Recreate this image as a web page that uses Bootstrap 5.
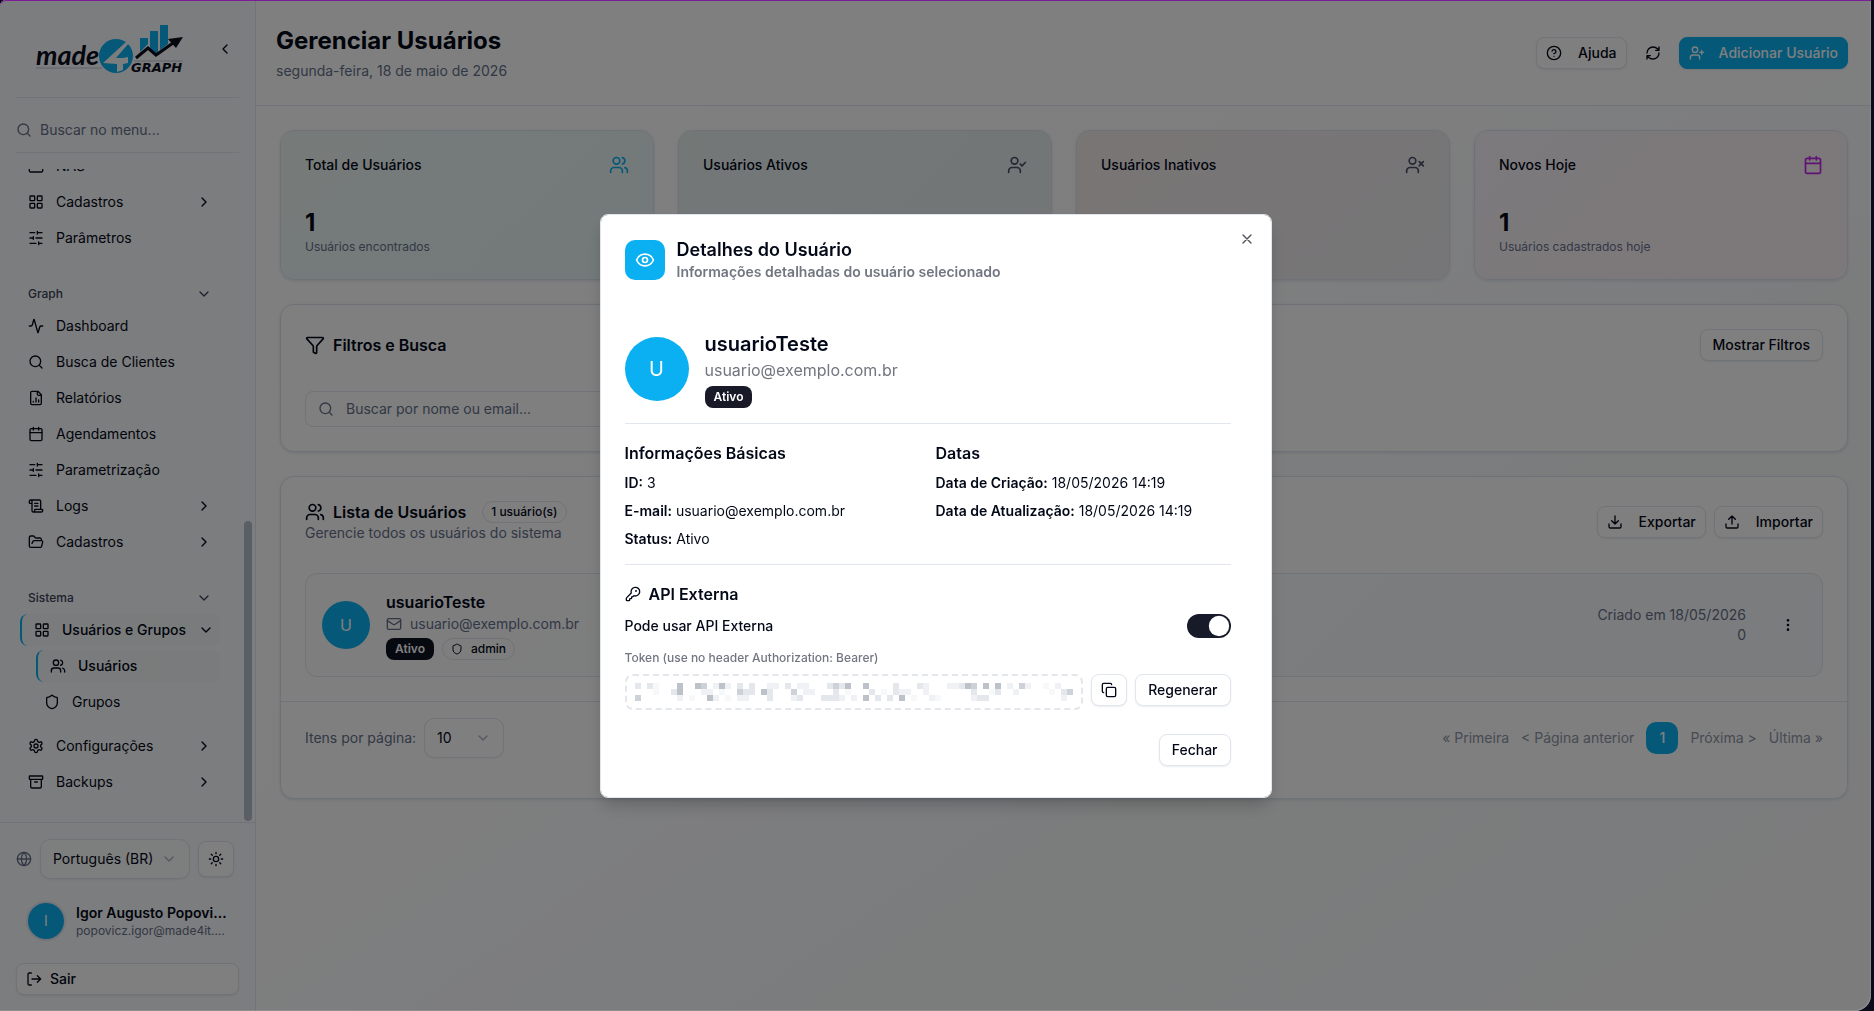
<!DOCTYPE html>
<html lang="pt-BR">
<head>
<meta charset="utf-8">
<meta name="viewport" content="width=device-width, initial-scale=1">
<title>Gerenciar Usuários</title>
<link href="https://cdn.jsdelivr.net/npm/bootstrap@5.3.0/dist/css/bootstrap.min.css" rel="stylesheet">
<style>
:root{--brand:#0ab0f1;--ink:#020817;--soft:#64708a;--line:#e1e6ee}
html{background:#0b0b1d}
body{font-family:Inter,"Liberation Sans",sans-serif;font-size:14px;line-height:20px;color:var(--ink);background:#0b0b1d;overflow:hidden}
h1,h2,h3,h4,p{margin:0}
a{color:inherit;text-decoration:none}
.ico{width:16px;height:16px;flex:none;fill:none;stroke:currentColor;stroke-width:2;stroke-linecap:round;stroke-linejoin:round}
.ico-lg{width:20px;height:20px}
.ico-sm{width:12px;height:12px}
.soft{color:var(--soft)}
.tiny{font-size:12px;line-height:16px}
.app-window{height:100vh;margin-right:3px;border-radius:6px 0 16px 0;overflow:hidden;background:linear-gradient(145deg,#fff 0%,#fdfdfe 45%,#f8fafd 65%,#f7f8f9 68%,#f8f9fb 100%)}
.side{width:256px;flex:none;background:#f9fafd;border-right:1px solid var(--line)}
.side-top{height:98px;margin:0 16px;border-bottom:1px solid var(--line);padding:24px 6px 0 20px}
.side-top .bare{padding-top:17px}
.logo{width:148px;height:52px;overflow:visible}
.side-find{height:55px;margin:0 16px 16px;border-bottom:1px solid var(--line);padding-top:10px}
.bare{border:0;background:none;padding:0;color:var(--ink)}
.side-find input{outline:0;min-width:0}
input::placeholder{color:var(--soft)!important;opacity:1}
.side-nav{flex:1 1 0;min-height:0;overflow:hidden;padding:0 35px 24px 16px;justify-content:flex-end}
.side-item{display:flex;align-items:center;gap:12px;height:32px;flex:none;padding:0 8px 0 12px;border-radius:8px;margin-bottom:4px;font-weight:400;white-space:nowrap}
.side-item.sub{margin-left:16px}
.side-item.on{margin-left:4px;border-left:2px solid var(--brand);background:linear-gradient(90deg,#f5f7f9,#f3f8f9);font-weight:500}
.side-item.on.sub{margin-left:20px}
.side-label{display:flex;align-items:center;justify-content:space-between;height:32px;flex:none;padding:0 8px 0 12px;margin-top:20px;font-size:12px;font-weight:500;color:#3b4358}
.side-thumb{position:absolute;right:3px;bottom:1px;width:8px;height:46%;border-radius:4px;background:#b4bccb}
.side-foot{border-top:1px solid var(--line);padding:16px}
.pick{appearance:none;height:40px;border:1px solid var(--line);border-radius:10px;background:#fff url("data:image/svg+xml,%3Csvg xmlns='http://www.w3.org/2000/svg' viewBox='0 0 24 24' fill='none' stroke='%23a9b0be' stroke-width='2' stroke-linecap='round' stroke-linejoin='round'%3E%3Cpath d='m6 9 6 6 6-6'/%3E%3C/svg%3E") no-repeat right 12px center/16px;padding:0 12px;font-size:14px;color:var(--ink);box-shadow:0 1px 2px rgba(15,23,42,.06)}
.side .pick{width:150px;background-color:#fbfcfd}
.pick.count{width:80px}
.line-btn{--bs-btn-font-size:14px;--bs-btn-line-height:20px;--bs-btn-font-weight:500;--bs-btn-padding-y:5px;--bs-btn-padding-x:12px;--bs-btn-color:var(--ink);--bs-btn-bg:#fff;--bs-btn-border-color:var(--line);--bs-btn-border-radius:8px;--bs-btn-hover-bg:#f4f6f9;--bs-btn-hover-color:var(--ink);--bs-btn-hover-border-color:var(--line);box-shadow:0 1px 2px rgba(15,23,42,.08);display:inline-flex;align-items:center;gap:16px}
.with-ico{--bs-btn-padding-x:9px}
.brand-btn{--bs-btn-color:#fff;--bs-btn-bg:var(--brand);--bs-btn-border-color:var(--brand);--bs-btn-hover-bg:#0a9fd9;--bs-btn-hover-color:#fff;gap:14px}
.square{--bs-btn-padding-x:0;width:36px;height:32px;justify-content:center}
.square.tall{height:36px}
.sync{padding:0 18px}
.disc{display:flex;align-items:center;justify-content:center;flex:none;border-radius:50%;background:var(--brand);color:#fff}
.disc-36{width:36px;height:36px;font-size:14px;box-shadow:0 0 0 2px #e3e9f0}
.disc-48{width:48px;height:48px;font-size:16px}
.disc-64{width:64px;height:64px;font-size:20px}
.me-card{gap:12px;padding:24px 12px}
.who{font-weight:600;font-size:14px;line-height:20px}
.page-top{height:106px;border-bottom:1px solid var(--line);padding:0 23px 0 20px;background:rgba(255,255,255,.7)}
.page-top h1{font-size:24px;line-height:32px;font-weight:700}
.page-body{padding:24px 23px 24px 24px;gap:24px}
.panel{border:1px solid #dde4ee;border-radius:14px;background:#fff;box-shadow:0 1px 3px rgba(50,80,130,.14)}
.stat{height:150px;padding:24px}
.stat h2{font-size:14px;line-height:20px;font-weight:500}
.stat strong{display:block;font-size:24px;line-height:32px;font-weight:700}
.stat-a{background:linear-gradient(135deg,#edf7f5,#e6f4f3)}
.stat-b{background:linear-gradient(135deg,#e7f0ef,#e6ebef)}
.stat-c{background:linear-gradient(135deg,#f3ebea,#ececf0)}
.stat-d{background:linear-gradient(135deg,#f8f4f9,#fbf0f3)}
.stat-b .ico,.stat-c .ico{color:#475069}
.panel h2.head{font-size:16px;line-height:22px;font-weight:600}
.panel-head{margin-bottom:30px}
.find-box{height:36px;width:448px;border:1px solid var(--line);border-radius:8px;padding:0 12px;gap:12px;color:var(--soft)}
.tagx{display:inline-flex;align-items:center;height:22px;padding:0 9px;border-radius:8px;font-size:12px;line-height:16px;font-weight:600;background:#0f1222;color:#fff}
.tagx.lined{background:none;border:1px solid var(--line);padding:0 8px;color:var(--ink);font-weight:500}
.tagx.round{border-radius:11px}
.user-row{border:1px solid var(--line);border-radius:12px;background:linear-gradient(135deg,#fdfdfe,#f6f8fb);padding:16px;height:104px}
.user-row .bare{padding:0 10px 0 18px}
.pager{gap:12px;color:#8e96a8}
.pager .now{width:32px;height:32px;border-radius:10px;background:var(--brand);color:#fff;font-weight:500;display:flex;align-items:center;justify-content:center}
.veil{display:block;width:auto;right:3px;background:rgba(0,0,0,.5);border-radius:6px 0 16px 0;box-shadow:inset 0 1px 0 #7a1d97,inset -1px -1px 0 rgba(255,255,255,.12);overflow:hidden}
.veil .modal-dialog{max-width:672px}
.veil .modal-content{border:1px solid #e1e6ee;border-radius:8px;padding:23px 40px 31px 24px;color:var(--ink);box-shadow:0 10px 18px -4px rgba(0,0,0,.22)}
.veil .tagx{background:#181a27}
.tile{width:40px;height:40px;border-radius:10px;background:var(--brand);color:#fff}
.dlg-title{font-size:18px;line-height:24px;font-weight:600}
.dlg-sub{font-weight:600;color:#717680}
.dlg-close{position:absolute;top:16px;right:16px;color:#4c515c;line-height:1}
.dlg-head{margin-bottom:48px}
.dlg-name{font-size:20px;line-height:28px;font-weight:600}
.dlg-mail{font-size:16px;line-height:24px;color:#717680}
.dlg-rule{height:1px;background:var(--line);margin:15px 0 17px}
.dlg-h{font-size:16px;line-height:24px;font-weight:600}
.facts p{margin-top:8px}
.facts b{font-weight:600}
.form-check-input.toggle{width:44px;height:24px;margin:0;float:none;border:0;background-color:#171a29;border-radius:12px;--bs-form-switch-bg:url("data:image/svg+xml,%3Csvg xmlns='http://www.w3.org/2000/svg' viewBox='-4 -4 8 8'%3E%3Ccircle r='3.4' fill='%23fff'/%3E%3C/svg%3E")!important}
.form-check-input.toggle:checked{background-color:#171a29}
.token{height:36px;border:2px dashed #e3e6eb;border-radius:8px;padding:0 8px;flex:1;overflow:hidden}
.token svg{width:438px;height:18px;flex:none}
</style>
</head>
<body>
<svg class="d-none" xmlns="http://www.w3.org/2000/svg">
<symbol id="i-left" viewBox="0 0 24 24"><path d="m15 18-6-6 6-6"/></symbol>
<symbol id="i-right" viewBox="0 0 24 24"><path d="m9 18 6-6-6-6"/></symbol>
<symbol id="i-down" viewBox="0 0 24 24"><path d="m6 9 6 6 6-6"/></symbol>
<symbol id="i-search" viewBox="0 0 24 24"><circle cx="11" cy="11" r="8"/><path d="m21 21-4.300-4.300"/></symbol>
<symbol id="i-nas" viewBox="0 0 24 24"><rect x="2" y="3" width="20" height="18" rx="2"/></symbol>
<symbol id="i-grid" viewBox="0 0 24 24"><rect x="3" y="3" width="7" height="7" rx="1"/><rect x="14" y="3" width="7" height="7" rx="1"/><rect x="14" y="14" width="7" height="7" rx="1"/><rect x="3" y="14" width="7" height="7" rx="1"/></symbol>
<symbol id="i-sliders" viewBox="0 0 24 24"><path d="M21 4h-7M10 4H3M21 12h-9M8 12H3M21 20h-5M12 20H3M14 2v4M8 10v4M16 18v4"/></symbol>
<symbol id="i-pulse" viewBox="0 0 24 24"><path d="M22 12h-2.480a2 2 0 0 0-1.930 1.460l-2.350 8.360a.25.25 0 0 1-.48 0L9.240 2.180a.25.25 0 0 0-.48 0l-2.350 8.360A2 2 0 0 1 4.490 12H2"/></symbol>
<symbol id="i-report" viewBox="0 0 24 24"><path d="M15 2H6a2 2 0 0 0-2 2v16a2 2 0 0 0 2 2h12a2 2 0 0 0 2-2V7ZM14 2v4a2 2 0 0 0 2 2h4M8 18v-1M12 18v-6M16 18v-3"/></symbol>
<symbol id="i-cal" viewBox="0 0 24 24"><path d="M8 2v4M16 2v4M3 10h18"/><rect x="3" y="4" width="18" height="18" rx="2"/></symbol>
<symbol id="i-scroll" viewBox="0 0 24 24"><path d="M15 12h-5M15 8h-5M19 17V5a2 2 0 0 0-2-2H4M8 21h12a2 2 0 0 0 2-2v-1a1 1 0 0 0-1-1H11a1 1 0 0 0-1 1v1a2 2 0 1 1-4 0V5a2 2 0 1 0-4 0v2a1 1 0 0 0 1 1h3"/></symbol>
<symbol id="i-folder" viewBox="0 0 24 24"><path d="m6 14 1.500-2.900A2 2 0 0 1 9.240 10H20a2 2 0 0 1 1.940 2.500l-1.540 6a2 2 0 0 1-1.950 1.500H4a2 2 0 0 1-2-2V5a2 2 0 0 1 2-2h3.900a2 2 0 0 1 1.690.9l.81 1.200a2 2 0 0 0 1.670.9H18a2 2 0 0 1 2 2v2"/></symbol>
<symbol id="i-users" viewBox="0 0 24 24"><path d="M16 21v-2a4 4 0 0 0-4-4H6a4 4 0 0 0-4 4v2M22 21v-2a4 4 0 0 0-3-3.870M16 3.130a4 4 0 0 1 0 7.750"/><circle cx="9" cy="7" r="4"/></symbol>
<symbol id="i-ucheck" viewBox="0 0 24 24"><path d="M16 21v-2a4 4 0 0 0-4-4H6a4 4 0 0 0-4 4v2M16 11l2 2 4-4"/><circle cx="9" cy="7" r="4"/></symbol>
<symbol id="i-ux" viewBox="0 0 24 24"><path d="M16 21v-2a4 4 0 0 0-4-4H6a4 4 0 0 0-4 4v2M17 8l5 5M22 8l-5 5"/><circle cx="9" cy="7" r="4"/></symbol>
<symbol id="i-uplus" viewBox="0 0 24 24"><path d="M16 21v-2a4 4 0 0 0-4-4H6a4 4 0 0 0-4 4v2M19 8v6M22 11h-6"/><circle cx="9" cy="7" r="4"/></symbol>
<symbol id="i-shield" viewBox="0 0 24 24"><path d="M20 13c0 5-3.500 7.500-7.660 8.950a1 1 0 0 1-.67-.01C7.500 20.500 4 18 4 13V6a1 1 0 0 1 1-1c2 0 4.500-1.200 6.240-2.720a1.170 1.170 0 0 1 1.520 0C14.510 3.810 17 5 19 5a1 1 0 0 1 1 1z"/></symbol>
<symbol id="i-gear" viewBox="0 0 24 24"><path d="M12.220 2h-.44a2 2 0 0 0-2 2v.18a2 2 0 0 1-1 1.730l-.43.25a2 2 0 0 1-2 0l-.15-.08a2 2 0 0 0-2.730.73l-.22.38a2 2 0 0 0 .73 2.730l.15.1a2 2 0 0 1 1 1.720v.51a2 2 0 0 1-1 1.740l-.15.09a2 2 0 0 0-.73 2.730l.22.38a2 2 0 0 0 2.730.73l.15-.08a2 2 0 0 1 2 0l.43.25a2 2 0 0 1 1 1.730V20a2 2 0 0 0 2 2h.44a2 2 0 0 0 2-2v-.18a2 2 0 0 1 1-1.730l.43-.25a2 2 0 0 1 2 0l.15.08a2 2 0 0 0 2.730-.73l.22-.39a2 2 0 0 0-.73-2.730l-.15-.08a2 2 0 0 1-1-1.740v-.5a2 2 0 0 1 1-1.740l.15-.09a2 2 0 0 0 .73-2.730l-.22-.38a2 2 0 0 0-2.730-.73l-.15.08a2 2 0 0 1-2 0l-.43-.25a2 2 0 0 1-1-1.730V4a2 2 0 0 0-2-2z"/><circle cx="12" cy="12" r="3"/></symbol>
<symbol id="i-box" viewBox="0 0 24 24"><rect x="2" y="3" width="20" height="5" rx="1"/><path d="M4 8v11a2 2 0 0 0 2 2h12a2 2 0 0 0 2-2V8M10 12h4"/></symbol>
<symbol id="i-globe" viewBox="0 0 24 24"><circle cx="12" cy="12" r="10"/><path d="M12 2a14.500 14.500 0 0 0 0 20 14.500 14.500 0 0 0 0-20M2 12h20"/></symbol>
<symbol id="i-sun" viewBox="0 0 24 24"><circle cx="12" cy="12" r="4"/><path d="M12 2v2M12 20v2M4.930 4.930l1.410 1.410M17.660 17.660l1.410 1.410M2 12h2M20 12h2M6.340 17.660l-1.410 1.410M19.070 4.930l-1.410 1.410"/></symbol>
<symbol id="i-out" viewBox="0 0 24 24"><path d="M8 21H5a2 2 0 0 1-2-2V5a2 2 0 0 1 2-2h3M17 17l5-5-5-5M22 12H9"/></symbol>
<symbol id="i-help" viewBox="0 0 24 24"><circle cx="12" cy="12" r="10"/><path d="M9.090 9a3 3 0 0 1 5.830 1c0 2-3 3-3 3M12 17h.01"/></symbol>
<symbol id="i-sync" viewBox="0 0 24 24"><path d="M3 12a9 9 0 0 1 9-9 9.750 9.750 0 0 1 6.740 2.740L21 8M21 3v5h-5M21 12a9 9 0 0 1-9 9 9.750 9.750 0 0 1-6.740-2.740L3 16M8 16H3v5"/></symbol>
<symbol id="i-funnel" viewBox="0 0 24 24"><path d="M10 20a1 1 0 0 0 .553.895l2 1A1 1 0 0 0 14 21v-7a2 2 0 0 1 .517-1.341L21.740 4.670A1 1 0 0 0 21 3H3a1 1 0 0 0-.742 1.670l7.225 7.989A2 2 0 0 1 10 14z"/></symbol>
<symbol id="i-mail" viewBox="0 0 24 24"><rect x="2" y="4" width="20" height="16" rx="2"/><path d="m22 7-8.970 5.700a1.940 1.940 0 0 1-2.060 0L2 7"/></symbol>
<symbol id="i-dl" viewBox="0 0 24 24"><path d="M12 3v12M7 10l5 5 5-5M21 15v4a2 2 0 0 1-2 2H5a2 2 0 0 1-2-2v-4"/></symbol>
<symbol id="i-ul" viewBox="0 0 24 24"><path d="M12 3v12M7 8l5-5 5 5M21 15v4a2 2 0 0 1-2 2H5a2 2 0 0 1-2-2v-4"/></symbol>
<symbol id="i-dots" viewBox="0 0 24 24"><circle cx="12" cy="12" r="1"/><circle cx="12" cy="5" r="1"/><circle cx="12" cy="19" r="1"/></symbol>
<symbol id="i-eye" viewBox="0 0 24 24"><path d="M2.062 12.348a1 1 0 0 1 0-.696 10.750 10.750 0 0 1 19.876 0 1 1 0 0 1 0 .696 10.750 10.750 0 0 1-19.876 0"/><circle cx="12" cy="12" r="3"/></symbol>
<symbol id="i-x" viewBox="0 0 24 24"><path d="M18 6 6 18M6 6l12 12"/></symbol>
<symbol id="i-key" viewBox="0 0 24 24"><path d="M2.586 17.414A2 2 0 0 0 2 18.828V21a1 1 0 0 0 1 1h3a1 1 0 0 0 1-1v-1a1 1 0 0 1 1-1h1a1 1 0 0 0 1-1v-1a1 1 0 0 1 1-1h.172a2 2 0 0 0 1.414-.586l.814-.814a6.500 6.500 0 1 0-4-4z"/><circle cx="16.500" cy="7.500" r=".5"/></symbol>
<symbol id="i-copy" viewBox="0 0 24 24"><rect x="8" y="8" width="14" height="14" rx="2"/><path d="M4 16c-1.100 0-2-.9-2-2V4c0-1.100.9-2 2-2h10c1.100 0 2 .9 2 2"/></symbol>
</svg>

<div class="app-window d-flex">
  <aside class="side d-flex flex-column">
    <div class="side-top d-flex justify-content-between align-items-start">
      <svg class="logo" viewBox="0 0 148 52" role="img" aria-label="made4graph">
        <path d="M0 44h66M98 37h49" stroke="#dde1e6" stroke-width="2"/>
        <text x="0" y="41" font-family="Lato" font-size="27" font-weight="700" font-style="italic" fill="#0b0d1c">made</text>
        <circle cx="80" cy="32" r="17" fill="#0ab0f1"/>
        <path d="M91 17 67 39l14 1v8l6-2v-6l5-1v-6l-5 1h-7l13-15z" fill="#f9fafd"/>
        <path d="M104 14h8v6l-8 8zM114 7h8v21l-4 3-4-5zM124 1h8v19l-8 6z" fill="#0ab0f1"/>
        <path d="m100 34 12-10 8 7 17-12" fill="none" stroke="#0b0d1c" stroke-width="3"/>
        <path d="m132 15 15-2-7 11z" fill="#0b0d1c"/>
        <text x="95" y="48" font-family="DejaVu Sans" font-size="13" font-weight="700" font-style="italic" fill="#0b0d1c">GRAPH</text>
      </svg>
      <button class="bare lh-1" aria-label="Recolher menu"><svg class="ico"><use href="#i-left"/></svg></button>
    </div>
    <div class="side-find d-flex align-items-center gap-2">
      <svg class="ico soft"><use href="#i-search"/></svg>
      <input class="bare flex-fill" type="text" aria-label="Buscar no menu" placeholder="Buscar no menu...">
    </div>
    <div class="position-relative d-flex flex-column flex-fill" style="min-height:0">
      <nav class="side-nav d-flex flex-column">
        <a class="side-item" href="#"><svg class="ico"><use href="#i-nas"/></svg>NAS</a>
        <a class="side-item" href="#"><svg class="ico"><use href="#i-grid"/></svg>Cadastros<svg class="ico ms-auto"><use href="#i-right"/></svg></a>
        <a class="side-item" href="#"><svg class="ico"><use href="#i-sliders"/></svg>Parâmetros</a>
        <div class="side-label">Graph<svg class="ico"><use href="#i-down"/></svg></div>
        <a class="side-item" href="#"><svg class="ico"><use href="#i-pulse"/></svg>Dashboard</a>
        <a class="side-item" href="#"><svg class="ico"><use href="#i-search"/></svg>Busca de Clientes</a>
        <a class="side-item" href="#"><svg class="ico"><use href="#i-report"/></svg>Relatórios</a>
        <a class="side-item" href="#"><svg class="ico"><use href="#i-cal"/></svg>Agendamentos</a>
        <a class="side-item" href="#"><svg class="ico"><use href="#i-sliders"/></svg>Parametrização</a>
        <a class="side-item" href="#"><svg class="ico"><use href="#i-scroll"/></svg>Logs<svg class="ico ms-auto"><use href="#i-right"/></svg></a>
        <a class="side-item" href="#"><svg class="ico"><use href="#i-folder"/></svg>Cadastros<svg class="ico ms-auto"><use href="#i-right"/></svg></a>
        <div class="side-label">Sistema<svg class="ico"><use href="#i-down"/></svg></div>
        <a class="side-item on" href="#"><svg class="ico"><use href="#i-grid"/></svg>Usuários e Grupos<svg class="ico ms-auto"><use href="#i-down"/></svg></a>
        <a class="side-item on sub" href="#"><svg class="ico"><use href="#i-users"/></svg>Usuários</a>
        <a class="side-item sub" href="#"><svg class="ico"><use href="#i-shield"/></svg>Grupos</a>
        <a class="side-item mt-2" href="#"><svg class="ico"><use href="#i-gear"/></svg>Configurações<svg class="ico ms-auto"><use href="#i-right"/></svg></a>
        <a class="side-item mb-0" href="#"><svg class="ico"><use href="#i-box"/></svg>Backups<svg class="ico ms-auto"><use href="#i-right"/></svg></a>
      </nav>
      <div class="side-thumb"></div>
    </div>
    <div class="side-foot d-flex flex-column">
      <div class="d-flex align-items-center gap-2">
        <svg class="ico soft"><use href="#i-globe"/></svg>
        <select class="pick" aria-label="Idioma"><option>Português (BR)</option></select>
        <button class="btn line-btn square tall" aria-label="Tema claro"><svg class="ico"><use href="#i-sun"/></svg></button>
      </div>
      <div class="me-card d-flex align-items-center">
        <div class="disc disc-36">I</div>
        <div class="overflow-hidden">
          <div class="who text-truncate">Igor Augusto Popovicz</div>
          <div class="soft tiny text-truncate">popovicz.igor@made4it.com.br</div>
        </div>
      </div>
      <button class="btn line-btn with-ico gap-2 w-100"><svg class="ico"><use href="#i-out"/></svg>Sair</button>
    </div>
  </aside>

  <main class="flex-fill d-flex flex-column" style="min-width:0">
    <header class="page-top d-flex align-items-center justify-content-between">
      <div>
        <h1>Gerenciar Usuários</h1>
        <p class="soft pt-1">segunda-feira, 18 de maio de 2026</p>
      </div>
      <div class="d-flex align-items-center">
        <button class="btn line-btn with-ico"><svg class="ico"><use href="#i-help"/></svg>Ajuda</button>
        <button class="bare sync lh-1" aria-label="Atualizar"><svg class="ico"><use href="#i-sync"/></svg></button>
        <button class="btn line-btn with-ico brand-btn"><svg class="ico"><use href="#i-uplus"/></svg>Adicionar Usuário</button>
      </div>
    </header>
    <div class="page-body d-flex flex-column">
      <section class="row row-cols-4 gx-4">
        <div class="col"><div class="panel stat stat-a">
          <div class="d-flex justify-content-between align-items-center mb-4"><h2>Total de Usuários</h2><svg class="ico ico-lg" style="color:var(--brand)"><use href="#i-users"/></svg></div>
          <strong class="pt-2">1</strong><div class="soft tiny">Usuários encontrados</div></div></div>
        <div class="col"><div class="panel stat stat-b">
          <div class="d-flex justify-content-between align-items-center mb-4"><h2>Usuários Ativos</h2><svg class="ico ico-lg"><use href="#i-ucheck"/></svg></div></div></div>
        <div class="col"><div class="panel stat stat-c">
          <div class="d-flex justify-content-between align-items-center mb-4"><h2>Usuários Inativos</h2><svg class="ico ico-lg"><use href="#i-ux"/></svg></div></div></div>
        <div class="col"><div class="panel stat stat-d">
          <div class="d-flex justify-content-between align-items-center mb-4"><h2>Novos Hoje</h2><svg class="ico ico-lg" style="color:#c026e8"><use href="#i-cal"/></svg></div>
          <strong class="pt-2">1</strong><div class="soft tiny">Usuários cadastrados hoje</div></div></div>
      </section>

      <section class="panel p-4">
        <div class="panel-head d-flex justify-content-between align-items-center">
          <h2 class="head d-flex align-items-center gap-2"><svg class="ico ico-lg"><use href="#i-funnel"/></svg>Filtros e Busca</h2>
          <button class="btn line-btn">Mostrar Filtros</button>
        </div>
        <div class="find-box d-flex align-items-center">
          <svg class="ico"><use href="#i-search"/></svg>
          <input class="bare flex-fill" type="text" aria-label="Buscar por nome ou email" placeholder="Buscar por nome ou email...">
        </div>
      </section>

      <section class="panel">
        <div class="p-4">
          <div class="panel-head d-flex justify-content-between align-items-center">
            <div>
              <h2 class="head d-flex align-items-center gap-2"><svg class="ico ico-lg"><use href="#i-users"/></svg>Lista de Usuários<span class="tagx lined round ms-2">1 usuário(s)</span></h2>
              <p class="soft">Gerencie todos os usuários do sistema</p>
            </div>
            <div class="d-flex gap-2">
              <button class="btn line-btn with-ico"><svg class="ico"><use href="#i-dl"/></svg>Exportar</button>
              <button class="btn line-btn with-ico"><svg class="ico"><use href="#i-ul"/></svg>Importar</button>
            </div>
          </div>
          <div class="user-row d-flex align-items-center">
            <div class="disc disc-48">U</div>
            <div class="ps-3">
              <h3 class="fs-6 fw-semibold lh-base">usuarioTeste</h3>
              <div class="soft d-flex align-items-center gap-2"><svg class="ico"><use href="#i-mail"/></svg>usuario@exemplo.com.br</div>
              <div class="d-flex gap-2 pt-1"><span class="tagx">Ativo</span><span class="tagx lined round gap-2"><svg class="ico ico-sm"><use href="#i-shield"/></svg>admin</span></div>
            </div>
            <div class="ms-auto me-3 text-end soft">Criado em 18/05/2026<br>0</div>
            <button class="bare lh-1" aria-label="Ações"><svg class="ico"><use href="#i-dots"/></svg></button>
          </div>
        </div>
        <div class="border-top px-4 pt-3 pb-4" style="border-color:var(--line)!important">
          <div class="d-flex justify-content-between align-items-center mb-3">
            <div class="d-flex align-items-center gap-2"><label class="soft" for="per">Itens por página:</label><select class="pick count" id="per"><option>10</option></select></div>
            <nav class="pager d-flex align-items-center" aria-label="Paginação">
              <a href="#">« Primeira</a><a href="#">&lt; Página anterior</a><a class="now" href="#">1</a><a href="#">Próxima &gt;</a><a href="#">Última »</a>
            </nav>
          </div>
        </div>
      </section>
    </div>
  </main>
</div>

<div class="modal veil" role="dialog" aria-modal="true" aria-labelledby="dlg">
  <div class="modal-dialog modal-dialog-centered my-0 min-vh-100">
    <div class="modal-content">
      <button class="bare dlg-close" aria-label="Fechar janela"><svg class="ico"><use href="#i-x"/></svg></button>
      <div class="dlg-head d-flex align-items-center gap-2">
        <div class="tile d-flex align-items-center justify-content-center me-1"><svg class="ico ico-lg"><use href="#i-eye"/></svg></div>
        <div><h2 class="dlg-title" id="dlg">Detalhes do Usuário</h2><p class="dlg-sub">Informações detalhadas do usuário selecionado</p></div>
      </div>
      <div class="d-flex align-items-center gap-3">
        <div class="disc disc-64">U</div>
        <div><h3 class="dlg-name">usuarioTeste</h3><p class="dlg-mail">usuario@exemplo.com.br</p><span class="tagx mt-1">Ativo</span></div>
      </div>
      <div class="dlg-rule"></div>
      <div class="row g-0 facts">
        <div class="col-6"><h3 class="dlg-h">Informações Básicas</h3><p><b>ID:</b> 3</p><p><b>E-mail:</b> usuario@exemplo.com.br</p><p><b>Status:</b> Ativo</p></div>
        <div class="col-6 ps-2"><h3 class="dlg-h">Datas</h3><p><b>Data de Criação:</b> 18/05/2026 14:19</p><p><b>Data de Atualização:</b> 18/05/2026 14:19</p></div>
      </div>
      <div class="dlg-rule"></div>
      <h3 class="dlg-h d-flex align-items-center gap-2"><svg class="ico"><use href="#i-key"/></svg>API Externa</h3>
      <div class="form-switch p-0 d-flex align-items-center justify-content-between mt-2">
        <label class="fw-medium" for="api">Pode usar API Externa</label>
        <input class="form-check-input toggle" type="checkbox" role="switch" id="api" checked>
      </div>
      <div class="tiny fw-medium mt-2 pt-1 mb-2" style="color:#717680">Token (use no header Authorization: Bearer)</div>
      <div class="d-flex gap-2 align-items-start">
        <div class="token d-flex align-items-center"><svg id="mosaic" viewBox="0 0 73 3" preserveAspectRatio="none" shape-rendering="crispEdges" aria-label="Token oculto"></svg></div>
        <button class="btn line-btn square" aria-label="Copiar token"><svg class="ico"><use href="#i-copy"/></svg></button>
        <button class="btn line-btn">Regenerar</button>
      </div>
      <div class="d-flex justify-content-end mt-4"><button class="btn line-btn">Fechar</button></div>
    </div>
  </div>
</div>
<script>
// Hidden token: each row lists the shaded cells as column:tone, 1 faint to 4 dark.
const rows = [
 "0:2 2:2 3:0 7:4 10:4 11:3 13:1 14:4 15:1 17:2 19:2 22:1 23:1 25:2 27:1 28:1 32:2 33:3 34:2 35:4 38:4 43:2 47:2 48:1 52:1 53:1 54:2 55:4 56:3 58:4 60:4 62:1 64:3 65:1 68:0 70:1",
 "3:0 6:2 7:4 11:1 12:1 14:0 17:3 18:2 19:2 21:4 22:2 26:3 28:1 29:1 33:2 35:0 39:2 41:0 43:2 44:1 45:1 48:1 56:2 59:0 60:2 63:1 69:0 71:2 72:3",
 "0:3 7:1 9:0 12:4 13:1 15:0 17:1 18:1 22:2 26:1 27:2 31:2 32:2 33:2 34:1 36:1 38:4 40:2 42:2 44:4 46:0 49:1 50:0 56:1 57:2 58:2 71:1"];
const tone = ["#f7f8f9", "#eff1f4", "#e4e7ec", "#cdd1d8", "#bcc1ca"];
const mosaic = document.getElementById("mosaic");
rows.forEach((r, y) => r.split(" ").forEach(c => {
  const [x, t] = c.split(":");
  const cell = document.createElementNS("http://www.w3.org/2000/svg", "rect");
  Object.entries({x, y, width: 1, height: 1, fill: tone[t]}).forEach(([k, v]) => cell.setAttribute(k, v));
  mosaic.append(cell);
}));
</script>
<script src="https://cdn.jsdelivr.net/npm/bootstrap@5.3.0/dist/js/bootstrap.bundle.min.js"></script>
</body>
</html>
